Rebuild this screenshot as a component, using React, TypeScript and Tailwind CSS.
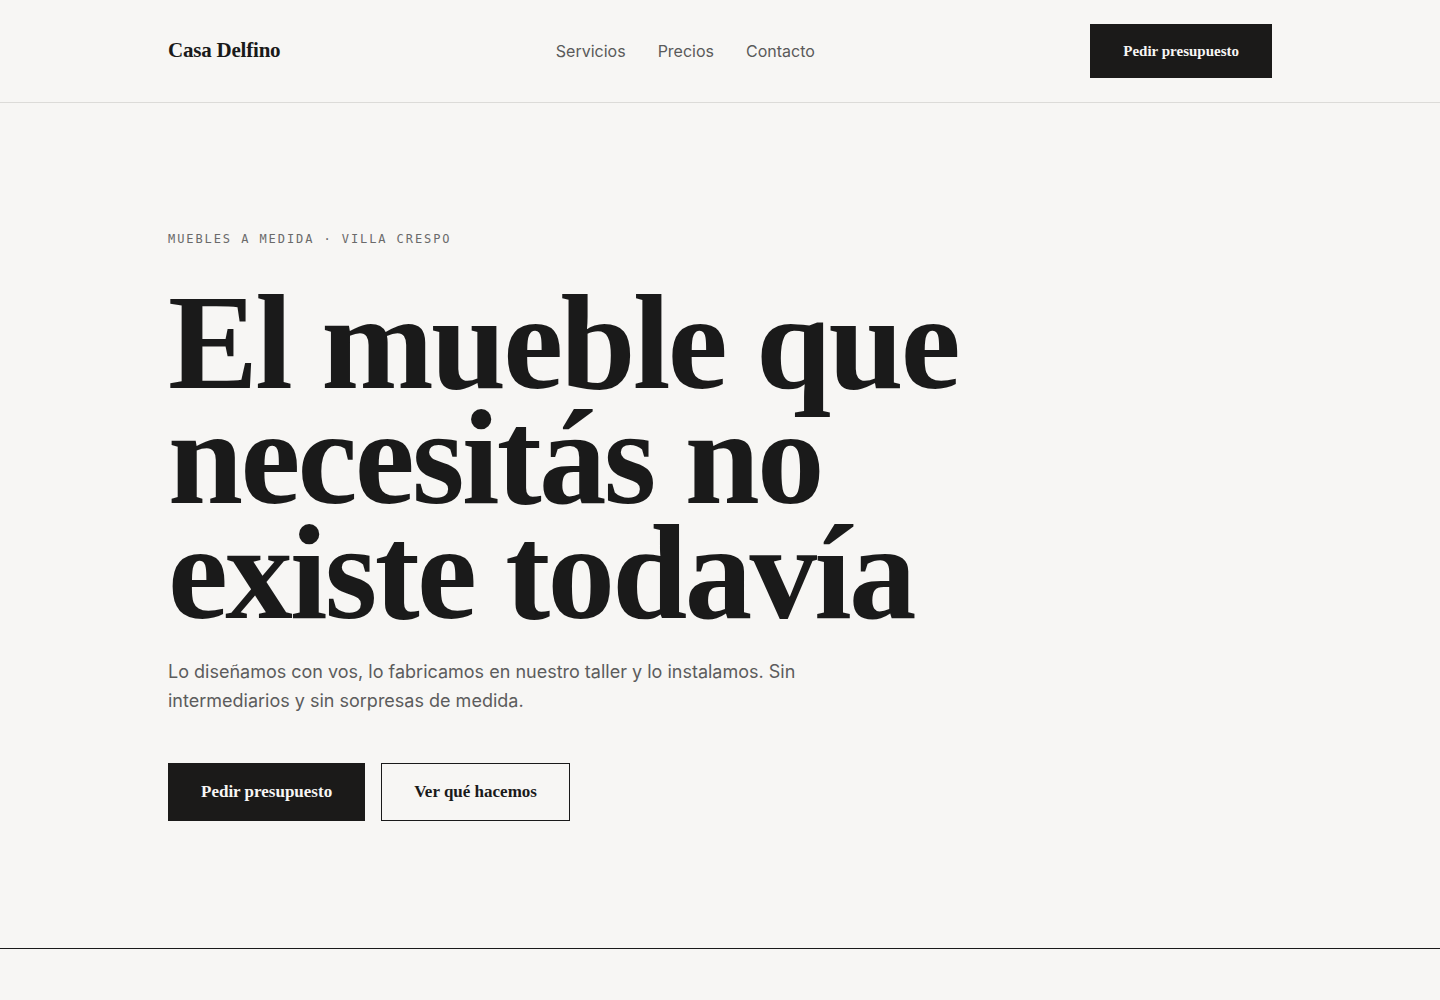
const serif = { fontFamily: '"Liberation Serif", "DejaVu Serif", serif' }
const mono = { fontFamily: '"DejaVu Sans Mono", "Liberation Mono", monospace' }

const servicios = [
  { n: '01', t: 'Cocinas', d: 'Bajo mesadas, alacenas e islas diseñadas para el espacio que tenés, no para un catálogo.' },
  { n: '02', t: 'Placares y vestidores', d: 'Interiores pensados prenda por prenda, con herrajes de cierre suave y frentes a elección.' },
  { n: '03', t: 'Bibliotecas y living', d: 'Estanterías, racks y modulares que aprovechan cada centímetro de pared.' },
  { n: '04', t: 'Oficinas y comercios', d: 'Escritorios, mostradores y exhibidores fabricados en serie corta o pieza única.' },
]

const precios = [
  { t: 'Diseño', p: 'Sin cargo', d: 'Visita, relevamiento de medidas y propuesta en 3D.' },
  { t: 'Fabricación', p: 'Desde $480.000', d: 'Melamina, MDF laqueado o madera maciza, según el proyecto.' },
  { t: 'Instalación', p: 'Incluida', d: 'En CABA y GBA. Retiramos los restos y dejamos todo limpio.' },
]

export default function App() {
  return (
    <div className="min-h-screen bg-[#f7f6f4] text-[#1a1a1a]" style={{ fontFamily: 'Inter, "Noto Sans", sans-serif' }}>
      {/* Header */}
      <header className="border-b border-[#dcdbd8]">
        <div className="mx-auto max-w-6xl px-6 py-6 flex items-center justify-between">
          <a href="#" className="text-[21px] font-bold tracking-[-0.01em] text-[#1a1a1a]" style={serif}>
            Casa Delfino
          </a>
          <nav className="flex items-center gap-8 text-base text-[#5a5a5a]">
            <a href="#servicios">Servicios</a>
            <a href="#precios">Precios</a>
            <a href="#contacto">Contacto</a>
          </nav>
          <a href="#contacto" className="bg-[#1b1a19] text-[#f7f6f4] px-[33px] py-4 text-[15px] leading-[22px] font-bold" style={serif}>
            Pedir presupuesto
          </a>
        </div>
      </header>

      {/* Hero */}
      <section className="border-b border-[#1a1a1a]">
        <div className="mx-auto max-w-6xl px-6 pt-32 pb-[127px]">
          <p className="text-xs leading-4 tracking-[0.16em] text-[#6a6a6a] uppercase" style={mono}>
            Muebles a medida · Villa Crespo
          </p>
          <h1 className="mt-[38px] text-[135px] leading-[115px] font-bold tracking-[-0.02em] text-[#1a1a1a]" style={serif}>
            El mueble que
            <br />
            necesitás no
            <br />
            existe todavía
          </h1>
          <p className="mt-[27px] max-w-2xl text-lg leading-relaxed text-[#5c5c5c]">
            Lo diseñamos con vos, lo fabricamos en nuestro taller y lo instalamos. Sin intermediarios y sin sorpresas de medida.
          </p>
          <div className="mt-[47px] flex items-center gap-4">
            <a href="#contacto" className="border border-[#1b1a19] bg-[#1b1a19] text-[#f7f6f4] px-8 py-4 text-[17px] leading-6 font-bold" style={serif}>
              Pedir presupuesto
            </a>
            <a href="#servicios" className="border border-[#1a1a1a] text-[#1a1a1a] px-8 py-4 text-[17px] leading-6 font-bold" style={serif}>
              Ver qué hacemos
            </a>
          </div>
        </div>
      </section>

      {/* Servicios */}
      <section id="servicios" className="border-b border-[#1a1a1a]">
        <div className="mx-auto max-w-6xl px-6 py-32">
          <p className="text-xs tracking-[0.16em] text-[#6a6a6a] uppercase" style={mono}>
            Servicios
          </p>
          <h2 className="mt-6 text-6xl font-bold tracking-[-0.02em]" style={serif}>Qué hacemos</h2>
          <div className="mt-16 grid grid-cols-2 gap-px bg-[#1a1a1a] border border-[#1a1a1a]">
            {servicios.map((s) => (
              <div key={s.n} className="bg-[#f7f6f4] p-10 h-[320px] flex flex-col">
                <span className="text-xs tracking-[0.16em] text-[#6a6a6a]" style={mono}>{s.n}</span>
                <h3 className="mt-auto text-3xl font-bold" style={serif}>{s.t}</h3>
                <p className="mt-3 text-base leading-relaxed text-[#5c5c5c] max-w-md">{s.d}</p>
              </div>
            ))}
          </div>
        </div>
      </section>

      {/* Precios */}
      <section id="precios" className="border-b border-[#1a1a1a]">
        <div className="mx-auto max-w-6xl px-6 py-32">
          <p className="text-xs tracking-[0.16em] text-[#6a6a6a] uppercase" style={mono}>
            Precios
          </p>
          <h2 className="mt-6 text-6xl font-bold tracking-[-0.02em]" style={serif}>Cómo cobramos</h2>
          <div className="mt-16 grid grid-cols-3 gap-8">
            {precios.map((p) => (
              <div key={p.t} className="border-t border-[#1a1a1a] pt-8 h-[260px]">
                <h3 className="text-2xl font-bold" style={serif}>{p.t}</h3>
                <p className="mt-4 text-lg text-[#1a1a1a]">{p.p}</p>
                <p className="mt-3 text-base leading-relaxed text-[#5c5c5c]">{p.d}</p>
              </div>
            ))}
          </div>
        </div>
      </section>

      {/* Contacto */}
      <section id="contacto">
        <div className="mx-auto max-w-6xl px-6 py-32">
          <h2 className="text-7xl font-bold tracking-[-0.02em]" style={serif}>Contanos tu idea</h2>
          <p className="mt-6 max-w-xl text-lg leading-relaxed text-[#5c5c5c]">
            Escribinos con las medidas aproximadas y una foto del espacio. Te respondemos en 48 horas.
          </p>
          <a href="#" className="mt-12 inline-block bg-[#1b1a19] text-[#f7f6f4] px-8 py-4 text-[17px] leading-6 font-bold" style={serif}>
            Pedir presupuesto
          </a>
        </div>
      </section>

      <footer className="border-t border-[#dcdbd8]">
        <div className="mx-auto max-w-6xl px-6 py-10 flex justify-between text-sm text-[#6a6a6a]">
          <span style={serif} className="font-bold text-[#1a1a1a]">Casa Delfino</span>
          <span>Villa Crespo, Buenos Aires</span>
        </div>
      </footer>
    </div>
  )
}
